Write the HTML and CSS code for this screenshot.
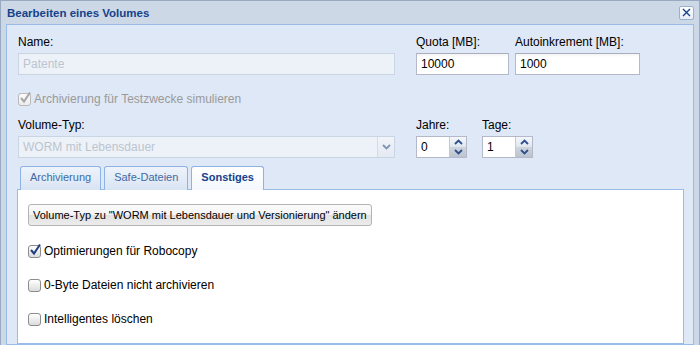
FILE: index.html
```html
<!DOCTYPE html>
<html lang="de">
<head>
  <meta charset="UTF-8" />
  <title>Bearbeiten eines Volumes</title>
  <link rel="stylesheet" href="styles.css">
</head>
<body>
  <div class="win">
    <div class="win-head">
      <span class="win-title">Bearbeiten eines Volumes</span>
      <span class="win-close">
        <svg width="9" height="9" viewBox="0 0 9 9"><path d="M1 1L8 8M8 1L1 8" stroke="#15428b" stroke-width="1.4" fill="none"/></svg>
      </span>
    </div>

    <div class="win-body">
      <!-- Name / Quota / Autoinkrement -->
      <div class="row">
        <div class="field f-name">
          <div class="lbl">Name:</div>
          <div class="txt disabled">Patente</div>
        </div>
        <div class="field f-quota">
          <div class="lbl">Quota [MB]:</div>
          <div class="txt">10000</div>
        </div>
        <div class="field f-auto">
          <div class="lbl">Autoinkrement [MB]:</div>
          <div class="txt">1000</div>
        </div>
      </div>

      <div class="check check-top disabled">
        <span class="cb">
          <svg width="14" height="14" viewBox="0 0 14 14"><path d="M3 7L6 10.5L12 1.5" stroke="#a7a7a7" stroke-width="2" fill="none"/></svg>
        </span>
        <span>Archivierung für Testzwecke simulieren</span>
      </div>

      <!-- Volume-Typ / Jahre / Tage -->
      <div class="row row-type">
        <div class="field f-name">
          <div class="lbl">Volume-Typ:</div>
          <div class="combo disabled">
            <span class="combo-val">WORM mit Lebensdauer</span>
            <span class="trigger">
              <svg width="9" height="6" viewBox="0 0 9 6"><path d="M1 1L4.5 4.5L8 1" stroke="#8294b4" stroke-width="1.8" fill="none"/></svg>
            </span>
          </div>
        </div>
        <div class="field f-spin">
          <div class="lbl">Jahre:</div>
          <div class="spin">
            <span class="spin-val">0</span>
            <span class="spin-btns">
              <span class="up"><svg width="9" height="6" viewBox="0 0 9 6"><path d="M1 5L4.5 1.5L8 5" stroke="#2d4f8e" stroke-width="1.8" fill="none"/></svg></span>
              <span class="down"><svg width="9" height="6" viewBox="0 0 9 6"><path d="M1 1L4.5 4.5L8 1" stroke="#2d4f8e" stroke-width="1.8" fill="none"/></svg></span>
            </span>
          </div>
        </div>
        <div class="field f-spin">
          <div class="lbl">Tage:</div>
          <div class="spin">
            <span class="spin-val">1</span>
            <span class="spin-btns">
              <span class="up"><svg width="9" height="6" viewBox="0 0 9 6"><path d="M1 5L4.5 1.5L8 5" stroke="#2d4f8e" stroke-width="1.8" fill="none"/></svg></span>
              <span class="down"><svg width="9" height="6" viewBox="0 0 9 6"><path d="M1 1L4.5 4.5L8 1" stroke="#2d4f8e" stroke-width="1.8" fill="none"/></svg></span>
            </span>
          </div>
        </div>
      </div>

      <!-- Tabs -->
      <div class="tabs">
        <div class="tab-strip">
          <span class="tab">Archivierung</span>
          <span class="tab">Safe-Dateien</span>
          <span class="tab active">Sonstiges</span>
        </div>
        <div class="tab-body">
          <div><button class="btn">Volume-Typ zu "WORM mit Lebensdauer und Versionierung" ändern</button></div>

          <div class="check">
            <span class="cb">
              <svg width="14" height="14" viewBox="0 0 14 14"><path d="M3 7L6 10.5L12 1.5" stroke="#1f3f7f" stroke-width="2" fill="none"/></svg>
            </span>
            <span>Optimierungen für Robocopy</span>
          </div>
          <div class="check">
            <span class="cb"></span>
            <span>0-Byte Dateien nicht archivieren</span>
          </div>
          <div class="check">
            <span class="cb"></span>
            <span>Intelligentes löschen</span>
          </div>
        </div>
      </div>
    </div>
  </div>
</body>
</html>
```

FILE: styles.css
```css
* {
  box-sizing: border-box;
}

html, body {
  margin: 0;
  height: 100%;
  overflow: hidden;
}

body {
  font-family: "Liberation Sans", Arial, sans-serif;
  font-size: 12px;
  color: #000;
  background: #cdd8e6;
}

.win {
  height: 345px;
  display: flex;
  flex-direction: column;
  border: 1px solid #99a9c2;
  border-bottom: 0;
  padding: 0 5px;
  background: #cdd8e6;
}

.win-head {
  height: 23px;
  flex: none;
  display: flex;
  align-items: center;
  justify-content: space-between;
  padding-left: 1px;
}

.win-title {
  font-weight: bold;
  font-size: 11.5px;
  color: #15428b;
}

.win-close {
  width: 15px;
  height: 14px;
  display: flex;
  align-items: center;
  justify-content: center;
  border: 1px solid #9bb0ce;
  border-radius: 2px;
  background: linear-gradient(#ffffff, #e6edf7);
}

.win-body {
  flex: 1;
  display: flex;
  flex-direction: column;
  border: 1px solid #99bbe8;
  background: #dfe8f6;
  padding: 10px 0 0 11px;
}

/* form rows */
.row {
  display: flex;
  gap: 21px;
}

.row .f-auto {
  margin-left: -15px;
}

.field .lbl {
  line-height: 15px;
  height: 15px;
  margin-bottom: 3px;
}

.f-name { width: 377px; }
.f-quota { width: 93px; }
.f-auto { width: 125px; }
.f-spin { width: 51px; }

.row-type {
  margin-top: 10px;
}

.row-type .f-spin + .f-spin {
  margin-left: -6px;
}

.txt {
  height: 22px;
  line-height: 20px;
  padding: 0 4px;
  border: 1px solid #b5b8c8;
  border-top-color: #a9adbd;
  background: linear-gradient(#f3f3f3, #ffffff 3px);
  white-space: nowrap;
}

.txt.disabled {
  border-color: #cad5e4;
  background: #edf2f9;
  color: #bcc4cf;
}

.combo {
  height: 22px;
  display: flex;
  border: 1px solid #cad5e4;
  background: #edf2f9;
}

.combo-val {
  flex: 1;
  line-height: 20px;
  padding: 0 4px;
  color: #bcc4cf;
}

.trigger {
  width: 17px;
  display: flex;
  align-items: center;
  justify-content: center;
  border-left: 1px solid #d3dbe6;
  background: linear-gradient(#f1f4f9, #e4eaf3);
}

.spin {
  height: 22px;
  display: flex;
  border: 1px solid #b5b8c8;
  background: #fff;
}

.spin-val {
  flex: 1;
  line-height: 20px;
  padding: 0 4px;
}

.spin-btns {
  width: 17px;
  display: flex;
  flex-direction: column;
  border-left: 1px solid #c4c9d3;
}

.spin-btns .up,
.spin-btns .down {
  flex: 1;
  display: flex;
  align-items: center;
  justify-content: center;
}

.spin-btns .up {
  background: linear-gradient(#f4f7fb, #dfe6f0);
}

.spin-btns .down {
  background: linear-gradient(#cfd5de, #bcc4cf);
}

/* checkboxes */
.check {
  display: flex;
  align-items: center;
  gap: 3px;
  height: 18px;
}

.check-top {
  margin-top: 15px;
}

.check.disabled {
  color: #9a9a9a;
}

.cb {
  position: relative;
  width: 13px;
  height: 13px;
  border: 1px solid #8c8c8c;
  border-radius: 3px;
  background: linear-gradient(#ffffff, #dcdcdc);
}

.check.disabled .cb {
  border-color: #b9b9b9;
  background: linear-gradient(#fbfbfb, #ececec);
}

.cb svg {
  position: absolute;
  left: -1px;
  top: -3px;
}

/* tab panel */
.tabs {
  flex: 1;
  display: flex;
  flex-direction: column;
  margin: 7px 9px 0 -1px;
}

.tab-strip {
  display: flex;
  gap: 3px;
  padding-left: 3px;
  height: 24px;
  align-items: flex-end;
}

.tab {
  height: 24px;
  line-height: 21px;
  padding: 0 9px;
  font-size: 11px;
  color: #416aa3;
  border: 1px solid #8db2e3;
  border-bottom: 0;
  border-radius: 3px 3px 0 0;
  background: linear-gradient(#eef3fb, #d9e4f3);
  margin-bottom: -1px;
  position: relative;
}

.tab.active {
  font-weight: bold;
  color: #15428b;
  background: linear-gradient(#ffffff, #f4f8fd);
  z-index: 1;
}

.tab-body {
  flex: 1;
  border: 1px solid #99bbe8;
  background: #fff;
  padding: 14px 10px;
}

.tab-body .check {
  margin-top: 16px;
}

.tab-body .check:first-of-type {
  margin-top: 14px;
}

.btn {
  height: 22px;
  padding: 0 4px;
  font-family: "Liberation Sans", Arial, sans-serif;
  font-size: 11px;
  color: #000;
  border: 1px solid #b3b3b3;
  border-radius: 3px;
  background: linear-gradient(#fbfbfb 0, #f3f3f3 50%, #e2e2e2 52%, #ececec 100%);
}
```
